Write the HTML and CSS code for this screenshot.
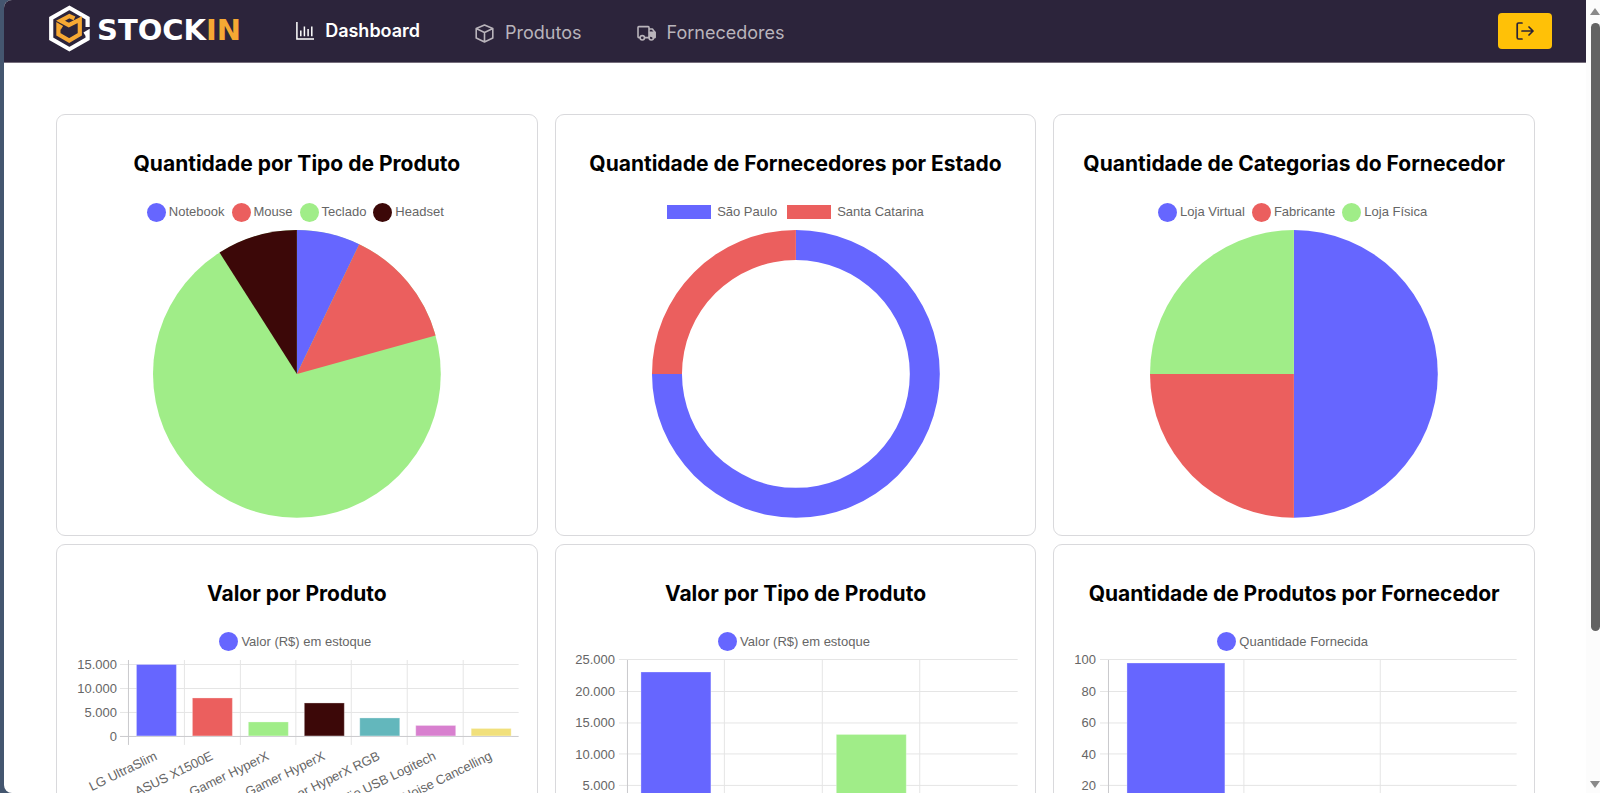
FILE: index.html
```html
<!DOCTYPE html>
<html lang="pt-BR">
<head>
<meta charset="utf-8">
<title>Stockin - Dashboard</title>
<link rel="stylesheet" href="styles.css">
</head>
<body>
<div class="app">
  <header class="topbar">
    <a class="brand" href="#">
      <svg width="41" height="47" viewBox="0 0 41 47" fill="none" aria-hidden="true">
        <path d="M38.6 22V13.3L20.4 2.800 2.200 13.300V33.700L20.400 44.200 38.600 33.700V27.500L35.500 29.300" stroke="#fff" stroke-width="4.200"/>
        <path d="M25.500 13.400L20.400 11 11.500 15.800 19.800 20.200 30.800 14.600V29.200L20.200 35.600 9.400 29.200V20.600L13 22.700" stroke="#f6a833" stroke-width="4.200"/>
      </svg>
      <span class="brand-name">STOCK<span class="brand-accent">IN</span></span>
    </a>
    <nav class="nav">
      <a class="nav-link active" href="#">
        <svg width="18" height="18" viewBox="0 0 18 18" fill="none" stroke="currentColor" stroke-width="1.5" aria-hidden="true"><path d="M.9 0V17H18M4.8 8.5V14.2M8.4 4.5V14.2M12.1 7V14.2M15.8 4.5V14.2"/></svg>
        <span>Dashboard</span>
      </a>
      <a class="nav-link" href="#">
        <svg width="19" height="19" viewBox="0 0 19 19" fill="none" stroke="currentColor" stroke-width="1.6" stroke-linejoin="round" aria-hidden="true"><path d="M9.5 1L17.8 4.6V14L9.5 18 1.2 14V4.6ZM1.2 4.6L9.5 8.4 17.8 4.6M9.5 8.4V18"/></svg>
        <span>Produtos</span>
      </a>
      <a class="nav-link" href="#">
        <svg width="19" height="19" viewBox="0 0 19 19" fill="none" stroke="currentColor" stroke-width="1.6" stroke-linejoin="round" aria-hidden="true"><path d="M3 13.6H1.8Q1 13.6 1 12.8V3.4Q1 2.6 1.8 2.6H11.2Q12 2.6 12 3.4V13.6H7.6M12 5H15.4L18 8.4V13.6H16.6"/><path d="M12.6 8.4H18V13H16L13 11Z" fill="currentColor"/><circle cx="5.3" cy="13.8" r="2.2"/><circle cx="14.3" cy="13.8" r="2.2"/></svg>
        <span>Fornecedores</span>
      </a>
    </nav>
    <button class="logout" type="button" aria-label="Sair">
      <svg width="18" height="18" viewBox="0 0 18 18" fill="none" stroke="currentColor" stroke-width="1.7" stroke-linecap="round" stroke-linejoin="round" aria-hidden="true"><path d="M6 1H2.6Q1.2 1 1.2 2.4V15.6Q1.2 17 2.6 17H6M6 9H17M13 5L17 9 13 13"/></svg>
    </button>
  </header>

  <main class="grid">
    <section class="card">
      <h2>Quantidade por Tipo de Produto</h2>
      <ul class="legend">
        <li><i class="dot blue"></i>Notebook</li>
        <li><i class="dot red"></i>Mouse</li>
        <li><i class="dot green"></i>Teclado</li>
        <li><i class="dot dark"></i>Headset</li>
      </ul>
      <svg class="pie" viewBox="0 0 288 288" role="img" aria-label="Quantidade por Tipo de Produto">
        <circle class="green" cx="144" cy="144" r="144"/>
        <path class="blue" d="M144 144V0A144 144 0 0 1 206.4 14.2Z"/>
        <path class="red" d="M144 144L206.4 14.2A144 144 0 0 1 282.8 105.5Z"/>
        <path class="dark" d="M144 144L66.6 22.6A144 144 0 0 1 144 0Z"/>
      </svg>
    </section>

    <section class="card">
      <h2>Quantidade de Fornecedores por Estado</h2>
      <ul class="legend wide">
        <li><i class="box blue"></i>São Paulo</li>
        <li><i class="box red"></i>Santa Catarina</li>
      </ul>
      <svg class="pie" viewBox="0 0 288 288" role="img" aria-label="Quantidade de Fornecedores por Estado">
        <path class="blue" d="M144 0A144 144 0 1 1 0 144H30A114 114 0 1 0 144 30Z"/>
        <path class="red" d="M0 144A144 144 0 0 1 144 0V30A114 114 0 0 0 30 144Z"/>
      </svg>
    </section>

    <section class="card">
      <h2>Quantidade de Categorias do Fornecedor</h2>
      <ul class="legend">
        <li><i class="dot blue"></i>Loja Virtual</li>
        <li><i class="dot red"></i>Fabricante</li>
        <li><i class="dot green"></i>Loja Física</li>
      </ul>
      <svg class="pie" viewBox="0 0 288 288" role="img" aria-label="Quantidade de Categorias do Fornecedor">
        <path class="blue" d="M144 0A144 144 0 0 1 144 288Z"/>
        <path class="red" d="M144 144V288A144 144 0 0 1 0 144Z"/>
        <path class="green" d="M144 144H0A144 144 0 0 1 144 0Z"/>
      </svg>
    </section>

    <section class="card">
      <h2>Valor por Produto</h2>
      <ul class="legend">
        <li><i class="dot blue"></i>Valor (R$) em estoque</li>
      </ul>
      <svg class="chart" viewBox="0 0 480 220" role="img" aria-label="Valor por Produto">
        <path class="gridline" d="M63 4.5H462M63 28.5H462M63 52.5H462M127.5 0V85M183.5 0V85M239 0V85M294.5 0V85M350.5 0V85M406.5 0V85"/>
        <path class="axis" d="M71.5 0V85M63 76.5H462"/>
        <g class="bars">
          <rect class="blue" x="79.5" y="4.500" width="40" height="71.500"/>
          <rect class="red" x="135.5" y="38" width="40" height="38"/>
          <rect class="green" x="191.5" y="62" width="40" height="14"/>
          <rect class="dark" x="247.5" y="43" width="40" height="33"/>
          <rect class="teal" x="303" y="58" width="40" height="18"/>
          <rect class="pink" x="359" y="65.500" width="40" height="10.500"/>
          <rect class="yellow" x="414.5" y="68.500" width="40" height="7.500"/>
        </g>
        <g class="labels">
          <text x="60" y="9">15.000</text>
          <text x="60" y="33">10.000</text>
          <text x="60" y="57">5.000</text>
          <text x="60" y="81">0</text>
          <text transform="translate(101 99) rotate(-26)">LG UltraSlim</text>
          <text transform="translate(157 99) rotate(-26)">ASUS X1500E</text>
          <text transform="translate(213 99) rotate(-26)">Teclado Gamer HyperX</text>
          <text transform="translate(269 99) rotate(-26)">Mouse Gamer HyperX</text>
          <text transform="translate(324 99) rotate(-26)">Mouse Gamer HyperX RGB</text>
          <text transform="translate(380 99) rotate(-26)">Teclado Sem Fio USB Logitech</text>
          <text transform="translate(436 99) rotate(-26)">Headset Noise Cancelling</text>
        </g>
      </svg>
    </section>

    <section class="card">
      <h2>Valor por Tipo de Produto</h2>
      <ul class="legend">
        <li><i class="dot blue"></i>Valor (R$) em estoque</li>
      </ul>
      <svg class="chart" viewBox="0 0 480 220" role="img" aria-label="Valor por Tipo de Produto">
        <path class="gridline" d="M63 -.5H462M63 31.5H462M63 63H462M63 94H462M63 125.5H462M168.500 0V165M266.5 0V165M364 0V165"/>
        <path class="axis" d="M71.5 0V165M63 157.5H462"/>
        <g class="bars">
          <rect class="blue" x="85" y="12" width="70" height="145"/>
          <rect class="green" x="280.500" y="74.500" width="70" height="82.500"/>
        </g>
        <g class="labels">
          <text x="59" y="4">25.000</text>
          <text x="59" y="36">20.000</text>
          <text x="59" y="67">15.000</text>
          <text x="59" y="99">10.000</text>
          <text x="59" y="130">5.000</text>
          <text x="59" y="162">0</text>
        </g>
      </svg>
    </section>

    <section class="card">
      <h2>Quantidade de Produtos por Fornecedor</h2>
      <ul class="legend">
        <li><i class="dot blue"></i>Quantidade Fornecida</li>
      </ul>
      <svg class="chart" viewBox="0 0 480 220" role="img" aria-label="Quantidade de Produtos por Fornecedor">
        <path class="gridline" d="M46 -.5H463M46 31.5H463M46 63H463M46 94H463M46 125.5H463M190 0V165M326.5 0V165"/>
        <path class="axis" d="M54.5 0V165M46 157.5H463"/>
        <g class="bars">
          <rect class="blue" x="73" y="3" width="98" height="154"/>
        </g>
        <g class="labels">
          <text x="42" y="4">100</text>
          <text x="42" y="36">80</text>
          <text x="42" y="67">60</text>
          <text x="42" y="99">40</text>
          <text x="42" y="130">20</text>
          <text x="42" y="162">0</text>
        </g>
      </svg>
    </section>
  </main>
</div>
<div class="scrollbar" aria-hidden="true">
  <span class="arrow up"></span>
  <span class="track"><span class="thumb"></span></span>
  <span class="arrow down"></span>
</div>
</body>
</html>
```
FILE: styles.css
```css
* { box-sizing: border-box; }
body {
  margin: 0;
  height: 100vh;
  overflow: hidden;
  display: flex;
  padding-left: 4px;
  background: linear-gradient(to right, #44566f 0 50%, #fcfcfc 50%);
  font-family: Inter, "Open Sans", sans-serif;
}
.app {
  flex: 1;
  min-width: 0;
  overflow: hidden;
  background: #fff;
  border-radius: 8px 0 0 8px;
}
.topbar {
  height: 63px;
  display: flex;
  align-items: center;
  padding: 0 34px 0 45px;
  background: #2c243b;
  border-bottom: 1px solid #766e7c;
}
.brand {
  display: flex;
  align-items: center;
  gap: 7px;
  padding-bottom: 5px;
  text-decoration: none;
}
.brand svg { display: block; }
.brand-name {
  padding-top: 2px;
  font: bold 29px/32px "DejaVu Sans", sans-serif;
  color: #fff;
}
.brand-accent { color: #f6a833; }
.nav {
  display: flex;
  align-items: center;
  gap: 55px;
  margin-left: 55px;
}
.nav-link {
  display: flex;
  align-items: center;
  gap: 11px;
  font-size: 18px;
  line-height: 24px;
  color: #b9b4bb;
  text-decoration: none;
  padding-top: 4px;
}
.nav-link.active {
  font-weight: 600;
  color: #fff;
  padding-top: 0;
}
.logout {
  margin-left: auto;
  width: 54px;
  height: 36px;
  display: flex;
  align-items: center;
  justify-content: center;
  border: 0;
  border-radius: 4px;
  background: #ffc107;
  color: #2b2438;
}
.grid {
  display: grid;
  grid-template-columns: repeat(3, minmax(0, 1fr));
  gap: 8px 17px;
  padding: 51px 51px 24px 52px;
}
.card {
  padding: 34px 0 17px;
  border: 1px solid #d9d9dc;
  border-radius: 9px;
}
.card h2 {
  margin: 0 0 23px;
  font-size: 21px;
  line-height: 30px;
  font-weight: 700;
  text-align: center;
  white-space: nowrap;
  color: #000;
}
.legend {
  display: flex;
  justify-content: center;
  gap: 7px;
  margin: 0 0 8px;
  padding: 0 3px 0 0;
  list-style: none;
  font: 13px/20px "Liberation Sans", Arial, sans-serif;
  color: #666;
}
.legend li { display: flex; align-items: center; gap: 3px; }
.legend.wide { gap: 10px; padding: 0; }
.legend.wide li { gap: 6px; }
.dot { width: 19px; height: 19px; border-radius: 50%; }
.box { width: 44px; height: 14px; }
.pie { display: block; width: 60%; margin: 0 auto; overflow: visible; }
.chart { display: block; width: 100%; overflow: visible; }
.blue { background: #6666ff; fill: #6666ff; }
.red { background: #eb5f5e; fill: #eb5f5e; }
.green { background: #a0ed88; fill: #a0ed88; }
.dark { background: #3c0808; fill: #3c0808; }
.teal { fill: #63b7bc; }
.pink { fill: #d880cf; }
.yellow { fill: #f1e07c; }
.gridline { stroke: #e5e5e5; }
.axis { stroke: #c9c9cc; }
.bars rect { stroke: rgba(255, 255, 255, .3); }
.labels {
  font: 13px "Liberation Sans", Arial, sans-serif;
  fill: #666;
  text-anchor: end;
}
.scrollbar {
  width: 14px;
  display: flex;
  flex-direction: column;
  align-items: center;
  padding: 8px 0 5px 4px;
  gap: 8px;
  background: #fcfcfc;
}
.arrow { border: 5px solid transparent; border-top-width: 0; border-bottom: 7px solid #8a8a8a; }
.arrow.down { border-top: 7px solid #8a8a8a; border-bottom-width: 0; }
.track { flex: 1; width: 9px; }
.thumb { display: block; height: 81%; border-radius: 5px; background: #636363; }
```
